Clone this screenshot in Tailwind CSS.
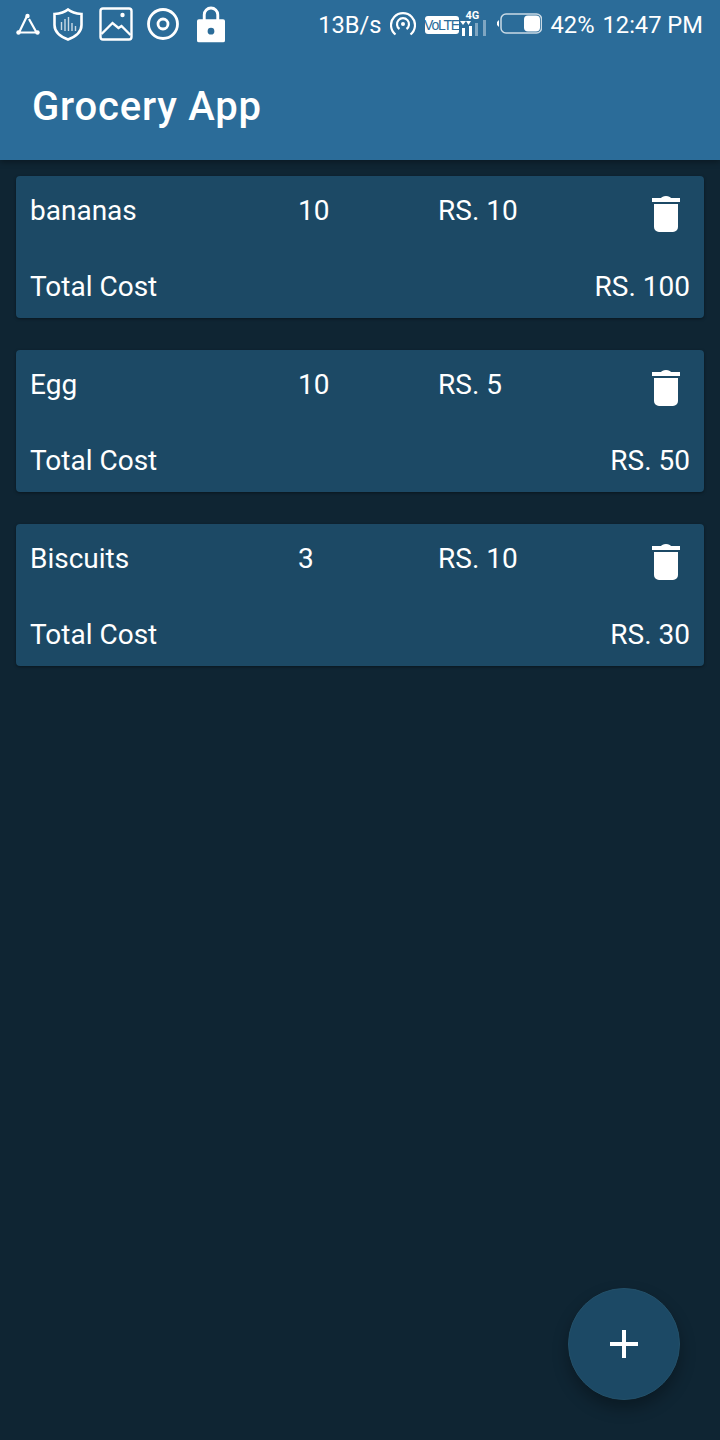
<!DOCTYPE html>
<html lang="en">
<head>
  <meta charset="UTF-8" />
  <title>Grocery App</title>
  <script src="https://cdn.jsdelivr.net/npm/@tailwindcss/browser@4"></script>
</head>
<body class="bg-[#0f2533] text-white font-['Roboto',sans-serif]">
  <div class="relative h-[1440px] w-[720px] overflow-hidden">
    <!-- app bar with status bar -->
    <header class="h-40 bg-[#2b6c99] shadow-[0_2px_6px_rgba(0,0,0,0.35)]">
      <div class="flex h-[50px] items-center justify-between pl-4 pr-[17px]">
        <div class="-mt-[2px] flex items-center">
          <svg class="h-[22px] w-6" viewBox="0 0 24 22" fill="none" stroke="white" stroke-width="2.200"><path d="M11 3 3.500 18.500M13 6l7 12.500M3 19.500h18"/><circle cx="11.500" cy="3" r="2.200" fill="white" stroke="none"/><circle cx="2.500" cy="19.500" r="2.200" fill="white" stroke="none"/><circle cx="21.500" cy="19.500" r="2.200" fill="white" stroke="none"/></svg>
          <svg class="ml-[13px] h-[33px] w-[30px]" viewBox="0 0 30 33" fill="none" stroke="white"><path d="M15 1.500c3 2.500 7.500 4 13.500 4.500v11c0 7-5.500 11.500-13.500 14.500C7 28.500 1.500 24 1.500 17V6C7.500 5.500 12 4 15 1.500z" stroke-width="2.600"/><path d="M8.500 14v8M12 11v12M15.500 9v14M19 15v8M22.500 18v5" stroke-width="1.400" stroke-opacity="0.75"/></svg>
          <svg class="ml-4 h-[34px] w-[34px]" viewBox="0 0 34 34" fill="none" stroke="white" stroke-width="2.400"><rect x="1.500" y="1.500" width="31" height="31" rx="2.500"/><path d="M2.500 27l11-11 6 5 3-2 9 9"/><circle cx="23.500" cy="8" r="2.200" fill="white" stroke="none"/></svg>
          <svg class="ml-[14px] h-8 w-8" viewBox="0 0 32 32" fill="none" stroke="white"><circle cx="16" cy="16" r="14.500" stroke-width="2.800"/><circle cx="16" cy="16" r="5" stroke-width="2.800"/></svg>
          <svg class="ml-[18px] h-[38px] w-[28px]" viewBox="0 0 29 38" fill="white"><path d="M7.500 17V9.500a7 7 0 0 1 14 0V17" fill="none" stroke="white" stroke-width="3"/><path fill-rule="evenodd" d="M2 14h25a2 2 0 0 1 2 2v20a2 2 0 0 1-2 2H2a2 2 0 0 1-2-2V16a2 2 0 0 1 2-2zm12.500 9a3.500 3.500 0 1 0 0 7 3.500 3.500 0 0 0 0-7z"/></svg>
        </div>
        <div class="flex items-center">
          <span class="pt-[2px] text-[23.700px] leading-none">13B/s</span>
          <svg class="-mt-[2px] ml-2 h-[26px] w-[26px]" viewBox="0 0 26 26" fill="none" stroke="white" stroke-width="2.200"><path d="M5.500 23.500a12 12 0 1 1 15 0"/><path d="M9.500 18a6 6 0 1 1 7 0"/><circle cx="13" cy="13" r="2" fill="white" stroke="none"/></svg>
          <div class="ml-[9px] flex h-[18px] w-[34px] items-center justify-center overflow-hidden rounded-[3px] bg-white text-[14px] leading-none tracking-[-1.200px] text-[#2b6c99] font-['Liberation_Sans',sans-serif]">VoLTE</div>
          <div class="relative h-[28px] w-[28px]">
            <span class="absolute left-[7px] -top-[1px] text-[11px] font-bold leading-none">4G</span>
            <svg class="absolute left-0 top-0 h-[28px] w-[28px]" viewBox="0 0 28 28" fill="white"><path d="M1 10h6l-3 4zM7 10h5l-2.500 4zM3 17h3v8H3zM10 15h3v10h-3z"/><rect x="16" y="12" width="3" height="13" opacity="0.4"/><rect x="24" y="9" width="3" height="16" opacity="0.4"/></svg>
          </div>
          <svg class="-mt-[3px] ml-[10px] h-[21px] w-[45px]" viewBox="0 0 45 21" fill="none"><rect x="4" y="1" width="40.500" height="19" rx="5" stroke="white" stroke-opacity="0.75" stroke-width="1.500"/><path d="M0 9l2-2v7l-2-2z" fill="white"/><rect x="27" y="2.500" width="16" height="16" rx="4" fill="white"/></svg>
          <span class="ml-[9px] pt-[2px] text-[23.700px] leading-none">42%</span>
          <span class="ml-2 pt-[2px] text-[23.700px] leading-none">12:47 PM</span>
        </div>
      </div>
      <h1 class="pl-8 pt-[35px] text-[40px] font-medium leading-[44px] tracking-[0.800px]">Grocery App</h1>
    </header>

    <main class="flex flex-col gap-8 px-4 pt-4">
      <article class="h-[142px] rounded-[4px] bg-[#1c4965] px-[14px] shadow-[0_1px_3px_rgba(0,0,0,0.4)]">
        <div class="flex h-[68px] items-center pt-[2px] text-[28px]">
          <span class="w-[268px]">bananas</span>
          <span class="w-[140px]">10</span>
          <span class="flex-1">RS. 10</span>
          <svg class="mr-[10px] mt-[6px] h-9 w-7" viewBox="0 0 28 36" fill="white"><path d="M0 2h9c1-1 2-2 5-2s4 1 5 2h9v4H0zM2 8h24v23a5 5 0 0 1-5 5H7a5 5 0 0 1-5-5z"/></svg>
        </div>
        <div class="flex h-[68px] items-center justify-between pt-[18px] text-[28px]"><span>Total Cost</span><span>RS. 100</span></div>
      </article>
      <article class="h-[142px] rounded-[4px] bg-[#1c4965] px-[14px] shadow-[0_1px_3px_rgba(0,0,0,0.4)]">
        <div class="flex h-[68px] items-center pt-[2px] text-[28px]">
          <span class="w-[268px]">Egg</span>
          <span class="w-[140px]">10</span>
          <span class="flex-1">RS. 5</span>
          <svg class="mr-[10px] mt-[6px] h-9 w-7" viewBox="0 0 28 36" fill="white"><path d="M0 2h9c1-1 2-2 5-2s4 1 5 2h9v4H0zM2 8h24v23a5 5 0 0 1-5 5H7a5 5 0 0 1-5-5z"/></svg>
        </div>
        <div class="flex h-[68px] items-center justify-between pt-[18px] text-[28px]"><span>Total Cost</span><span>RS. 50</span></div>
      </article>
      <article class="h-[142px] rounded-[4px] bg-[#1c4965] px-[14px] shadow-[0_1px_3px_rgba(0,0,0,0.4)]">
        <div class="flex h-[68px] items-center pt-[2px] text-[28px]">
          <span class="w-[268px]">Biscuits</span>
          <span class="w-[140px]">3</span>
          <span class="flex-1">RS. 10</span>
          <svg class="mr-[10px] mt-[6px] h-9 w-7" viewBox="0 0 28 36" fill="white"><path d="M0 2h9c1-1 2-2 5-2s4 1 5 2h9v4H0zM2 8h24v23a5 5 0 0 1-5 5H7a5 5 0 0 1-5-5z"/></svg>
        </div>
        <div class="flex h-[68px] items-center justify-between pt-[18px] text-[28px]"><span>Total Cost</span><span>RS. 30</span></div>
      </article>
    </main>

    <button class="absolute left-[568px] top-[1288px] flex h-28 w-28 items-center justify-center rounded-full border border-[#235069] bg-[#1c4965] shadow-[0_8px_16px_rgba(0,0,0,0.3)]">
      <svg class="h-7 w-7" viewBox="0 0 28 28" fill="white"><path d="M12 0h4v12h12v4H16v12h-4V16H0v-4h12z"/></svg>
    </button>
  </div>
</body>
</html>
